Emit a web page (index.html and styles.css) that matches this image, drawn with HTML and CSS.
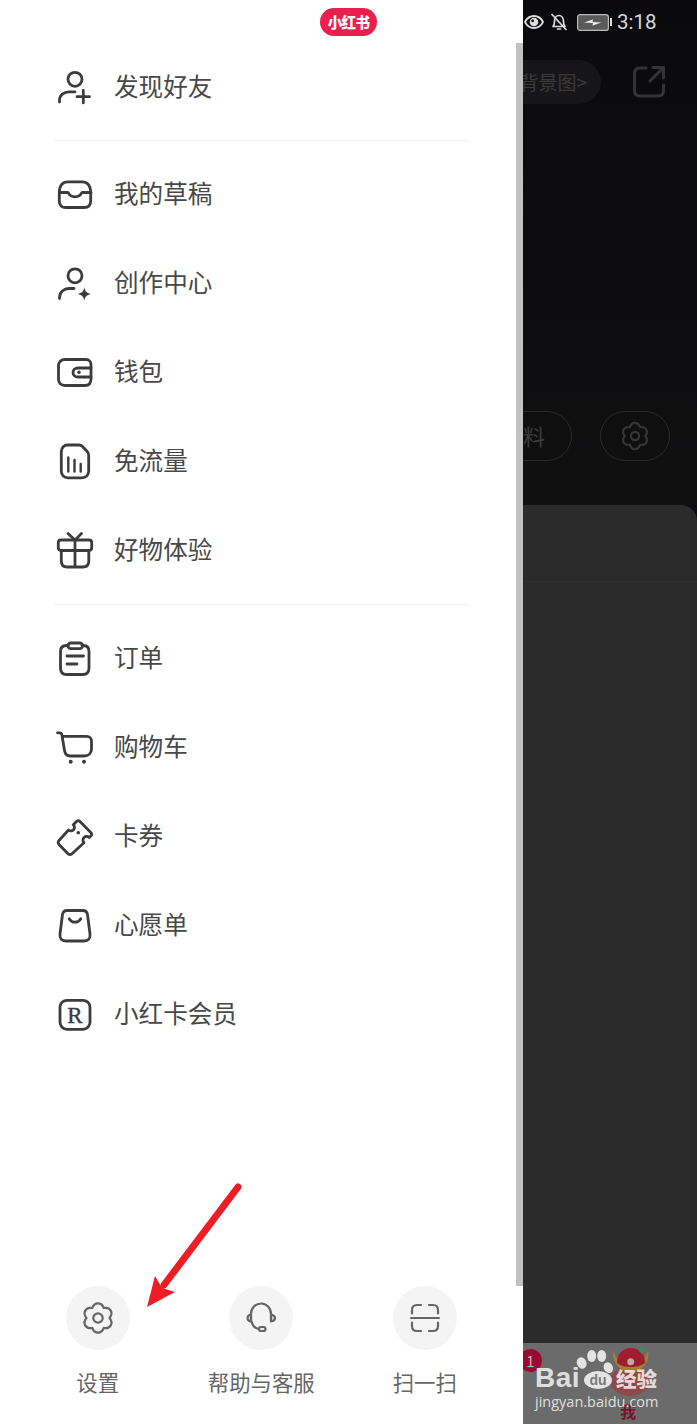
FILE: index.html
```html
<!DOCTYPE html>
<html lang="zh-CN">
<head>
<meta charset="utf-8">
<title>小红书</title>
<link rel="stylesheet" href="styles.css">
</head>
<body>
<div class="page">
  <aside class="drawer">
    <div class="scrollbar"></div>
    <div class="topbar"><span class="brand">小红书</span></div>

    <nav class="menu">
      <a class="row">
        <svg class="ico" viewBox="0 0 36 36"><circle cx="18" cy="10.3" r="7"/><path d="M2.500 33v-1.500C2.500 26 7 22.800 12 22.800h6"/><path d="M26.300 21.500v12.400M20 27.700h12.500"/></svg>
        <span>发现好友</span>
      </a>
      <hr class="rule">
      <a class="row">
        <svg class="ico" viewBox="0 0 36 36"><path d="M2.300 16.500C2.500 9 6 5.800 11 5.800h14c5 0 8.500 3.200 8.700 10.700v8.500c0 4.500-2.500 6.500-6.500 6.500H8.800c-4 0-6.500-2-6.500-6.500z"/><path d="M2.300 16.500h8.200c.5 0 1 .3 1.200.8.8 2 3.300 3.500 6.300 3.500s5.500-1.500 6.300-3.500c.2-.5.7-.8 1.200-.8h8.500"/></svg>
        <span>我的草稿</span>
      </a>
      <a class="row">
        <svg class="ico" viewBox="0 0 36 36"><circle cx="18" cy="10.800" r="7"/><path d="M2.500 33.500v-1C2.500 27 7 23.500 12 23.500h5"/><path class="solid" d="M27.300 22.300c.8 4.200 2.200 5.700 6.500 6.700-4.300 1-5.700 2.500-6.500 6.700-.8-4.200-2.200-5.700-6.500-6.700 4.300-1 5.700-2.500 6.500-6.700z"/></svg>
        <span>创作中心</span>
      </a>
      <a class="row">
        <svg class="ico" viewBox="0 0 36 36"><path d="M29 5.500H8C4 5.500 1.500 8 1.500 12v13c0 4 2.500 6.500 6.500 6.500h20c4 0 6-2.500 6-6.500V10.500c0-3-2-5-5-5z"/><path d="M34 14h-13c-3 0-5 2-5 4.500s2 4.500 5 4.500h13"/><circle class="solid" cx="22" cy="18.300" r="1.700"/></svg>
        <span>钱包</span>
      </a>
      <a class="row">
        <svg class="ico" viewBox="0 0 36 36"><path d="M11 2h11c1.500 0 2.500.5 3.500 1.500L30 8.300c1 1 1.700 2.200 1.700 3.700v16c0 4.500-3 6.800-6.700 6.800H11c-4 0-6.700-2.300-6.700-6.800V9c0-4.500 2.700-7 6.700-7z"/><path class="thin" d="M11.300 14.500v14M17.500 17v11.500M23.700 21v7.500"/></svg>
        <span>免流量</span>
      </a>
      <a class="row">
        <svg class="ico" viewBox="0 0 36 36"><path d="M4 8h28c1.500 0 2.700 1.200 2.700 2.700v5.100c0 1.500-1.200 2.700-2.700 2.700H4c-1.500 0-2.700-1.200-2.700-2.700v-5.100C1.300 9.200 2.500 8 4 8z"/><path d="M4.300 18.500V29c0 4 2 6 6 6h15.500c4 0 6-2 6-6V18.500M18 8v27M11 1.500L18 8l6.500-6.500"/></svg>
        <span>好物体验</span>
      </a>
      <hr class="rule">
      <a class="row">
        <svg class="ico" viewBox="0 0 36 36"><path d="M11 5.500h-1.500c-4 0-6 2.300-6 6V28c0 4 2 6.500 6 6.500h16.500c4 0 6-2.500 6-6.500V11.500c0-3.700-2-6-6-6H25"/><rect x="11" y="3" width="14.500" height="5.700" rx="2.800"/><path d="M10 16h16.500M10 24h10"/></svg>
        <span>订单</span>
      </a>
      <a class="row">
        <svg class="ico" viewBox="0 0 36 36"><path d="M.5 3.800h2.200c1.200 0 2 .8 2.200 2l2.600 15.700c.6 3.500 2.800 5.500 6 5.500H27c4.500 0 7.500-2.800 7.500-7v-8c0-2.500-2-4.700-4.800-4.700H5.500"/><circle class="solid" cx="13.700" cy="32.800" r="2"/><circle class="solid" cx="27" cy="32.800" r="2"/></svg>
        <span>购物车</span>
      </a>
      <a class="row">
        <svg class="ico" viewBox="0 0 36 36"><path d="M19.500 3.500Q21.300 1.800 23 3.500L33.800 14.500Q35.500 16.300 33.800 18L32.200 19.600A3.200 3.200 0 0 0 27 24.800L15 35.800Q13 37.500 11 35.800L2 26.500Q.3 24.500 2 22.500L11.500 12A3.200 3.200 0 0 0 16.300 6.800z"/><circle class="solid" cx="21.300" cy="14.700" r="1.800"/></svg>
        <span>卡券</span>
      </a>
      <a class="row">
        <svg class="ico" viewBox="0 0 36 36"><path d="M10 3.500h16c2.500 0 4 1.500 4.500 4L33 27c.5 4.500-1.500 7-6 7H9c-4.500 0-6.500-2.500-6-7L5.500 7.500c.5-2.500 2-4 4.500-4z"/><path d="M12.300 11.800c1.200 2.300 3.200 3.400 5.700 3.400s4.500-1.100 5.700-3.400"/></svg>
        <span>心愿单</span>
      </a>
      <a class="row">
        <svg class="ico" viewBox="0 0 36 36"><rect x="3" y="4.300" width="30" height="29" rx="7"/><text class="rmark" x="18" y="26.500">R</text></svg>
        <span>小红卡会员</span>
      </a>
    </nav>

    <div class="tools">
      <div class="tool">
        <div class="disc">
          <svg class="tool-ico" viewBox="-18 -18 36 36"><path d="M5.750 -9.960C3.500 -16.300 -3.500 -16.300 -5.750 -9.960C-12.370 -11.180 -15.870 -5.120 -11.500 0C-15.870 5.120 -12.370 11.180 -5.750 9.960C-3.500 16.300 3.500 16.300 5.750 9.960C12.370 11.180 15.870 5.120 11.500 0C15.870 -5.120 12.370 -11.180 5.750 -9.960Z"/><circle r="4.700"/></svg>
        </div>
        <span>设置</span>
      </div>
      <div class="tool">
        <div class="disc">
          <svg class="tool-ico" viewBox="-18 -18 36 36"><path d="M-10 3V-4C-10 -10 -5.500 -14.500 0 -14.500S10 -10 10 -4V3"/><path d="M-10 -3.500C-12.500 -3 -13.500 -1.500 -13.500 0S-12.500 3 -10 3.500z"/><path d="M10 -3.500C12.500 -3 14 -1.500 14 0S12.500 3 10 3.500z"/><path d="M-9.500 3.500C-8.500 8 -5.500 10.500 -2 11"/><rect x="-2" y="9" width="6.500" height="4" rx="2"/></svg>
        </div>
        <span>帮助与客服</span>
      </div>
      <div class="tool">
        <div class="disc">
          <svg class="tool-ico" viewBox="-18 -18 36 36"><path d="M-13 -4.500V-8C-13 -11 -11 -13 -8 -13H-4M4 -13H8C11 -13 13 -11 13 -8V-4.500M-13 4.500V8C-13 11 -11 13 -8 13H-4M4 13H8C11 13 13 11 13 8V4.500M-14 0H14"/></svg>
        </div>
        <span>扫一扫</span>
      </div>
    </div>

    <svg class="arrow" viewBox="0 0 240 180"><path class="arrow-shaft" d="M92 7L18 105"/><path class="arrow-head" d="M1 127L9 96 16 108 29 112z"/></svg>
  </aside>

  <section class="backdrop">
    <div class="upper">
      <div class="status">
        <svg class="st-eye" viewBox="0 0 20 16"><path d="M1 8C3 4 6 2 10 2s7 2 9 6c-2 4-5 6-9 6S3 12 1 8z"/><circle cx="10" cy="8" r="4.300"/><circle class="st-hole" cx="8.600" cy="6.800" r="1.400"/></svg>
        <svg class="st-bell" viewBox="0 0 18 18"><path d="M3 13.500c1.500-1.500 1.500-3 1.500-5C4.500 5 6.500 2.500 9 2.500s4.500 2.500 4.500 6c0 2 0 3.500 1.500 5z"/><path d="M7.500 16h3M2 1.500l14 15"/></svg>
        <div class="st-batt"><svg viewBox="0 0 32 17"><rect class="st-cell" x=".6" y=".6" width="30.800" height="15.800" rx="2.500"/><path class="st-bolt" d="M7 8.500L16 5.500 15.500 8l9 .5-9 3 .5-2.500z"/></svg><i class="st-nub"></i></div>
        <span class="clock">3:18</span>
      </div>
      <div class="toolbar">
        <div class="bg-pill">背景图&gt;</div>
        <svg class="share" viewBox="0 0 32 32"><path d="M13 2H7C3.500 2 1.500 4 1.500 7.500v17C1.500 28 3.500 30 7 30h18c3.500 0 5.500-2 5.500-5.500V19"/><path d="M17 15L30 2M20 1.500h10.500V12"/></svg>
      </div>
      <div class="actions">
        <div class="edit-pill">料</div>
        <div class="gear-pill">
          <svg class="gear" viewBox="-18 -18 36 36"><path d="M5.750 -9.960C3.500 -16.300 -3.500 -16.300 -5.750 -9.960C-12.370 -11.180 -15.870 -5.120 -11.500 0C-15.870 5.120 -12.370 11.180 -5.750 9.960C-3.500 16.300 3.500 16.300 5.750 9.960C12.370 11.180 15.870 5.120 11.500 0C15.870 -5.120 12.370 -11.180 5.750 -9.960Z"/><circle r="4.700"/></svg>
        </div>
      </div>
    </div>
    <div class="panel"><div class="panel-head"></div></div>
    <div class="tabbar">
      <i class="tab-badge">1</i>
      <svg class="mascot" viewBox="0 0 42 50"><ellipse class="m-face" cx="20" cy="34" rx="20" ry="15"/><path class="m-brim" d="M3 3C2 14 9 25 21 25S40 14 38 3C36 12 30 17 21 17S5 12 3 3z"/><path class="m-hat" d="M7 16C7 6 14 1 21 1s14 5 14 15c-4 3-9 4-14 4S11 19 7 16z"/><circle class="m-eye" cx="20.700" cy="14.700" r="3.500"/><path class="m-leaf" d="M31.700 7l-4-4.500 2.500-2 1.500 1.500 1.500-1.500 2.500 2z"/></svg>
      <span class="tab-me">我</span>
      <div class="mark">
        <svg class="paw" viewBox="0 0 48 46"><ellipse cx="7.700" cy="16" rx="4.800" ry="5.800" transform="rotate(-25 7.700 16)"/><ellipse cx="17.700" cy="9" rx="4.500" ry="6"/><ellipse cx="27.700" cy="9" rx="4.500" ry="6"/><ellipse cx="34.300" cy="20.700" rx="4.500" ry="5.500" transform="rotate(-25 34.300 20.700)"/><ellipse cx="24" cy="33" rx="14" ry="9"/><text class="paw-du" x="24" y="38">du</text></svg>
        <div class="mark-top"><b class="mark-bai">Bai</b><b class="mark-jy">经验</b></div>
        <div class="mark-url">jingyan.baidu.com</div>
      </div>
    </div>
  </section>
</div>
</body>
</html>
```

FILE: styles.css
```css
* { box-sizing: border-box; }
html, body { margin: 0; padding: 0; background: #fff; }
body { font-family: "Noto Sans CJK SC", "Noto Sans", sans-serif; }

.page { display: flex; width: 697px; height: 1424px; overflow: hidden; }

/* drawer */
.drawer { position: relative; display: flex; flex-direction: column; width: 523px; height: 1424px; background: #fff; flex: none; }
.scrollbar { position: absolute; right: 0; top: 43px; width: 7px; height: 1243px; background: #c2c2c2; }
.topbar { display: flex; justify-content: flex-end; height: 42px; padding: 8px 146px 0 0; }
.brand { display: flex; align-items: center; justify-content: center; width: 57px; height: 28px; border-radius: 14px; background: #ea1f4d; color: #fff; font-size: 14.5px; font-weight: 900; letter-spacing: -.7px; line-height: 1; }

.menu { display: flex; flex-direction: column; }
.row { display: flex; align-items: center; height: 89px; padding-left: 57px; color: #484848; font-size: 24.6px; line-height: 1; }
.row span { margin-left: 21px; padding-bottom: 3px; }
.ico { width: 36px; height: 36px; flex: none; overflow: visible; fill: none; stroke: #3c3c3c; stroke-width: 2.8; stroke-linecap: round; stroke-linejoin: round; }
.ico .solid { fill: #3c3c3c; stroke: none; }
.ico .thin { stroke-width: 2.4; }
.ico .rmark { fill: #3c3c3c; stroke: #3c3c3c; stroke-width: .4; font-family: "Liberation Serif", serif; font-size: 23px; font-weight: 400; text-anchor: middle; }
.rule { width: 415px; height: 1px; margin: 9px 0 8.5px 54px; border: 0; background: #efefef; flex: none; }

.tools { display: grid; grid-template-columns: repeat(3, 163.5px); margin-top: auto; padding: 0 0 27px 16px; }
.tool { display: flex; flex-direction: column; align-items: center; color: #666; font-size: 21.4px; line-height: 30px; }
.tool span { margin-top: 17.5px; }
.disc { display: flex; align-items: center; justify-content: center; width: 64px; height: 64px; border-radius: 50%; background: #f4f4f4; }
.tool-ico { width: 36px; height: 36px; fill: none; stroke: #666; stroke-width: 2.2; stroke-linecap: round; stroke-linejoin: round; }

.arrow { position: absolute; left: 146px; top: 1180px; width: 240px; height: 180px; overflow: visible; }
.arrow-shaft { fill: none; stroke: #ee1c25; stroke-width: 7; stroke-linecap: round; }
.arrow-head { fill: #ee1c25; }

/* dimmed page behind the drawer */
.backdrop { position: relative; display: flex; flex-direction: column; flex: 1; min-width: 0; overflow: hidden; background: #0e0e10; }
.upper { display: flex; flex-direction: column; height: 505px; flex: none; background: linear-gradient(#0a0a0d, #101011); }
.status { display: flex; align-items: center; height: 44px; padding-left: 1px; color: #ddd; flex: none; }
.st-eye { width: 20px; height: 16px; fill: none; stroke: #ddd; stroke-width: 1.8; }
.st-eye circle { fill: #ddd; stroke: none; }
.st-eye .st-hole { fill: #111; }
.st-bell { width: 18px; height: 18px; margin-left: 6px; fill: none; stroke: #ddd; stroke-width: 1.7; stroke-linecap: round; stroke-linejoin: round; }
.st-batt { display: flex; align-items: center; margin-left: 9px; }
.st-batt svg { width: 32px; height: 17px; }
.st-cell { fill: #5a5a5a; stroke: #bbb; stroke-width: 1.2; }
.st-bolt { fill: #f2f2f2; }
.st-nub { display: block; width: 2px; height: 8px; margin-left: 1px; background: #ddd; }
.clock { margin-left: 5px; font-family: Roboto, sans-serif; font-size: 20.5px; color: #d8d8d8; }

.toolbar { display: flex; align-items: center; justify-content: flex-end; gap: 32px; height: 44px; margin-top: 16px; padding-right: 32px; flex: none; }
.bg-pill { flex: none; width: 120px; height: 44px; padding-right: 14px; border-radius: 22px; background: #161618; color: #3a3a3a; font-size: 19px; line-height: 44px; text-align: right; white-space: nowrap; }
.share { width: 32px; height: 32px; flex: none; fill: none; stroke: #343436; stroke-width: 3; stroke-linecap: round; stroke-linejoin: round; }

.actions { display: flex; justify-content: flex-end; gap: 28px; margin-top: 307px; padding-right: 27px; flex: none; }
.edit-pill { flex: none; width: 120px; height: 50px; padding-right: 26px; border: 1px solid #2b2b2c; border-radius: 25px; color: #3c3c3c; font-size: 22px; line-height: 46px; text-align: right; }
.gear-pill { display: flex; align-items: center; justify-content: center; flex: none; width: 70px; height: 50px; border: 1px solid #2b2b2c; border-radius: 25px; }
.gear { width: 32px; height: 32px; fill: none; stroke: #363637; stroke-width: 2.4; }

.panel { flex: 1; background: #2b2b2b; border-top-right-radius: 16px; }
.panel-head { height: 77px; border-bottom: 1px solid #2f2f2f; }

.tabbar { position: relative; height: 81px; flex: none; background: #6b6b6b; }
.tab-badge { position: absolute; left: -4px; top: 6px; width: 23px; height: 23px; border-radius: 50%; background: #9a0b32; color: #b8b8b8; font-size: 15px; font-style: normal; line-height: 23px; text-align: center; }
.mascot { position: absolute; left: 87px; top: 4px; width: 42px; height: 50px; }
.m-hat { fill: #a11c30; }
.m-brim { fill: #a08428; }
.m-face { fill: #8f4a48; }
.m-eye { fill: #b9a9a0; }
.m-leaf { fill: #3f8a5a; }
.tab-me { position: absolute; left: 97px; top: 57px; color: #761230; font-size: 16px; font-weight: 700; line-height: 22px; }

.mark { position: absolute; left: 12px; top: 0; width: 130px; height: 81px; color: rgba(255,255,255,.8); }
.paw { position: absolute; left: 39px; top: 4px; width: 48px; height: 46px; fill: rgba(255,255,255,.82); }
.paw-du { fill: #7a7a7a; font-family: "Liberation Sans", sans-serif; font-size: 14px; font-weight: 700; text-anchor: middle; }
.mark-top { position: relative; display: flex; justify-content: space-between; width: 122px; margin-top: 21px; font-weight: 700; line-height: 28px; }
.mark-bai { font-family: "Liberation Sans", sans-serif; font-size: 28px; letter-spacing: .5px; }
.mark-jy { font-size: 20.5px; }
.mark-url { position: relative; margin-top: -1px; font-family: "Open Sans", sans-serif; font-size: 14.5px; line-height: 22px; white-space: nowrap; }
```
